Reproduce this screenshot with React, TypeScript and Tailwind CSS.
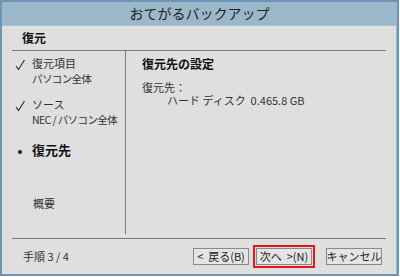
const FONT = {
  fontFamily: '"Noto Sans CJK JP", "Noto Sans", sans-serif',
};

function Check() {
  return (
    <svg width="11" height="12" viewBox="0 0 11 12" className="shrink-0">
      <path d="M1 7 L3.5 10.5 L9.5 1" fill="none" stroke="#333" strokeWidth="1.2" />
    </svg>
  );
}

function Step({
  mark,
  title,
  sub,
  bold,
}: {
  mark: "check" | "dot" | "none";
  title: string;
  sub?: string;
  bold?: boolean;
}) {
  return (
    <div className="flex whitespace-nowrap">
      <div className="w-[17px] pt-[4px] flex justify-start">
        {mark === "check" && <Check />}
        {mark === "dot" && <div className="w-[4px] h-[4px] rounded-full bg-[#222] mt-[4px] ml-[3px]" />}
      </div>
      <div className="leading-[16px]">
        <div className={bold ? "text-[13px] font-bold text-[#111]" : "text-[11px] text-[#333]"}>{title}</div>
        {sub && <div className="text-[10.5px] text-[#333] tracking-[-0.6px] whitespace-pre">{sub}</div>}
      </div>
    </div>
  );
}

function Btn({ label, active }: { label: string; active?: boolean }) {
  return (
    <div className={active ? "border-2 border-[#e8141c] p-[1px]" : "p-[3px]"}>
      <div className="w-[56px] h-[17px] border border-[#8a8a8a] bg-[#e4e4e4] text-[11px] text-[#222] flex items-center justify-center leading-none whitespace-pre">
        {label}
      </div>
    </div>
  );
}

export default function App() {
  return (
    <div style={FONT} className="w-[400px] h-[277px] bg-white">
      <div className="w-[399px] h-[276px] border-[2px] border-[#6f92b8] flex flex-col bg-[#dfdfdf]">
        <div className="h-[24px] bg-[#9bb8cb] flex items-center justify-center text-[14px] text-[#222] border-b border-[#a8c0d0]">
          おてがるバックアップ
        </div>
        <div className="flex-1 flex flex-col px-[10px] border-r border-[#8fc2d6]">
          <div className="h-[24px] flex items-center pl-[10px] text-[12px] font-bold text-[#111]">
            復元
          </div>
          <div className="h-px bg-[#7a7a7a]" />
          <div className="h-[187px] flex">
            <div className="w-[114px] border-r border-[#7a7a7a] mb-[4px] pl-[3px] pt-[4px] flex flex-col">
              <Step mark="check" title="復元項目" sub="パソコン全体" />
              <div className="h-[9px]" />
              <Step mark="check" title="ソース" sub="NEC / パソコン全体" />
              <div className="h-[14px]" />
              <Step mark="dot" title="復元先" bold />
              <div className="h-[37px]" />
              <div className="pl-[18px] text-[11px] text-[#333]">概要</div>
            </div>
            <div className="flex-1 pl-[16px] pt-[5px] text-[#333] whitespace-nowrap">
              <div className="text-[12px] font-bold text-[#111] leading-[16px]">復元先の設定</div>
              <div className="mt-[9px] text-[11px] leading-[13px]">復元先：</div>
              <div className="text-[11px] leading-[13px] pl-[25px]">ハード ディスク&nbsp;&nbsp;0.465.8 GB</div>
            </div>
          </div>
          <div className="h-px bg-[#7a7a7a]" />
          <div className="flex-1 flex items-center pb-[1px]">
            <div className="pl-[11px] text-[11px] text-[#333]">手順 3 / 4</div>
            <div className="ml-auto flex items-center gap-[1px] pr-[1px]">
              <Btn label="<  戻る(B)" />
              <Btn label="次へ  >(N)" active />
              <div className="w-[6px]" />
              <Btn label="キャンセル" />
            </div>
          </div>
        </div>
      </div>
    </div>
  );
}
